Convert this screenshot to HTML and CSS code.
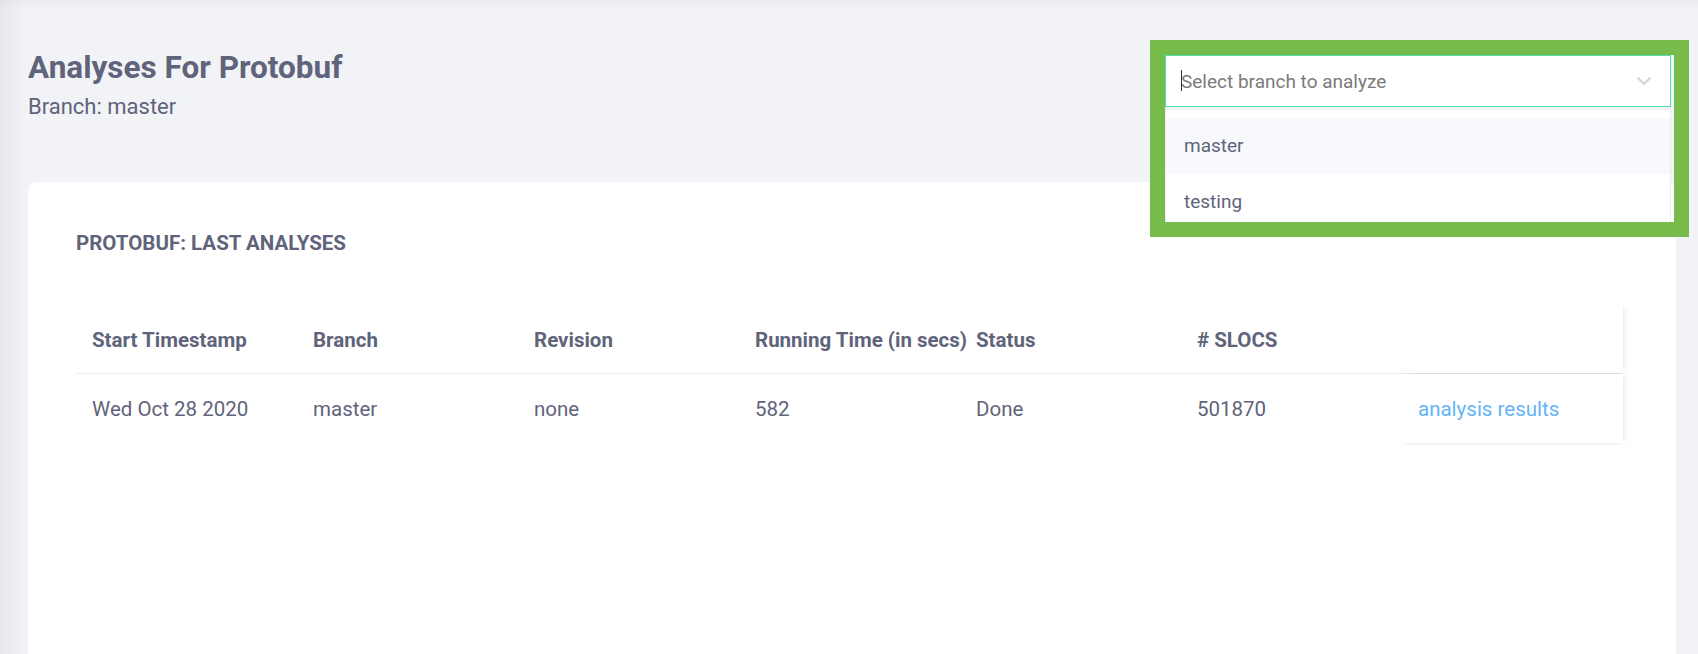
FILE: index.html
```html
<!DOCTYPE html>
<html>
<head>
<meta charset="utf-8">
<link rel="stylesheet" href="styles.css">
</head>
<body>
<div class="page">
  <header class="head">
    <div class="titles">
      <h1 class="title">Analyses For Protobuf</h1>
      <div class="subtitle">Branch: master</div>
    </div>
    <div class="select">
      <div class="select-input">
        <span class="caret"></span>
        <span class="placeholder">Select branch to analyze</span>
        <svg class="chev" width="16" height="10" viewBox="0 0 16 10"><path d="M1.5 1.5 L8 8 L14.5 1.5" fill="none" stroke="#d4d4d4" stroke-width="2.2"/></svg>
      </div>
      <ul class="options">
        <li class="opt opt-hl">master</li>
        <li class="opt">testing</li>
      </ul>
      <div class="annot"></div>
    </div>
  </header>
  <main class="card">
    <h2 class="card-title">PROTOBUF: LAST ANALYSES</h2>
    <div class="table">
      <div class="row row-head">
        <div class="cell">Start Timestamp</div>
        <div class="cell">Branch</div>
        <div class="cell">Revision</div>
        <div class="cell">Running Time (in secs)</div>
        <div class="cell">Status</div>
        <div class="cell"># SLOCS</div>
        <div class="cell cell-fixed cell-fixed-head"></div>
      </div>
      <div class="row row-body">
        <div class="cell">Wed Oct 28 2020</div>
        <div class="cell">master</div>
        <div class="cell">none</div>
        <div class="cell">582</div>
        <div class="cell">Done</div>
        <div class="cell">501870</div>
        <div class="cell cell-fixed cell-fixed-body"><a class="link" href="#">analysis results</a></div>
      </div>
    </div>
  </main>
</div>
</body>
</html>
```
FILE: styles.css
```css
* { box-sizing: border-box; }
html, body { margin: 0; padding: 0; }
body {
  font-family: Roboto, "Noto Sans", Arial, sans-serif;
  color: #60647a;
  background: #f2f3f7;
  width: 1698px;
  height: 654px;
  overflow: hidden;
}
.page {
  height: 654px;
  display: flex;
  flex-direction: column;
  background:
    linear-gradient(to bottom, rgba(0,0,0,0.025), rgba(0,0,0,0) 12px),
    linear-gradient(to right, #e7e8ed, #f2f3f7 26px);
}
.head {
  display: flex;
  justify-content: space-between;
  align-items: flex-start;
  padding: 55px 27px 0 28px;
  height: 182px;
}
.title {
  margin: -6px 0 0 0;
  font-size: 31.5px;
  line-height: 38px;
  font-weight: 700;
  color: #60647a;
}
.subtitle {
  margin-top: 6px;
  font-size: 22px;
  line-height: 28px;
}
.select {
  position: relative;
  width: 506px;
  height: 52px;
  z-index: 5;
}
.select-input {
  height: 52px;
  border: 1px solid #4ee0b0;
  background: #fff;
  display: flex;
  align-items: center;
  padding: 0 18px 0 15px;
}
.caret {
  width: 1px;
  height: 21px;
  background: #333;
  align-self: center;
  position: relative;
  top: -1px;
}
.placeholder {
  flex: 1;
  font-size: 19px;
  color: #7b7b7b;
  margin-left: -1px;
}
.chev { display: block; }
.options {
  position: absolute;
  left: 0;
  top: 54px;
  width: 506px;
  margin: 0;
  padding: 8px 0 0 0;
  list-style: none;
  background: #fff;
  border: 1px solid #eceef2;
  height: 120px;
  overflow: hidden;
}
.opt {
  height: 56px;
  line-height: 56px;
  padding-left: 18px;
  font-size: 19px;
  color: #60647a;
}
.opt-hl { background: #f8f9fc; }
.annot {
  position: absolute;
  left: -15px;
  top: -15px;
  width: 539px;
  height: 197px;
  border: 15px solid #77bb4b;
  pointer-events: none;
}
.card {
  flex: 1;
  background: #fff;
  margin: 0 22px 0 28px;
  border-radius: 8px 8px 0 0;
  padding: 48px 48px 0 48px;
}
.card-title {
  margin: 0;
  font-size: 20.5px;
  line-height: 26px;
  font-weight: 700;
  color: #60647a;
}
.table {
  margin-top: 49px;
  width: 1547px;
}
.row {
  display: grid;
  grid-template-columns: repeat(7, 221px);
}
.row-head {
  height: 69px;
  border-bottom: 1px solid #ebeef5;
  font-weight: 700;
}
.row-body {
  height: 70px;
}
.cell {
  padding: 0 0 0 16px;
  display: flex;
  align-items: center;
  font-size: 20.5px;
  white-space: nowrap;
}
.row-head .cell { padding-top: 1px; }
.cell-fixed {
  background: #fff;
  box-shadow: 4px 0 6px -2px rgba(0,0,0,0.08), 0 2px 3px -1px rgba(0,0,0,0.06);
}
.cell-fixed-head { height: 68px; }
.cell-fixed-body { height: 69px; }
.link {
  color: #66b4f7;
  text-decoration: none;
}
```
